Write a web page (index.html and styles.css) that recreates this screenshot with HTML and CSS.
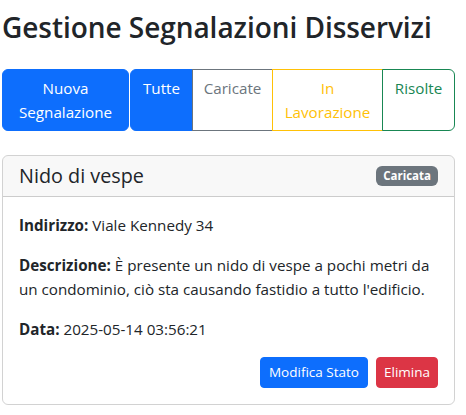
FILE: index.html
```html
<!DOCTYPE html>
<html lang="it">
<head>
<meta charset="utf-8">
<title>Gestione Segnalazioni Disservizi</title>
<link rel="stylesheet" href="styles.css">
</head>
<body>
<div class="page">
  <h1 class="title">Gestione Segnalazioni Disservizi</h1>
  <div class="toolbar">
    <a class="btn btn-primary w-new">Nuova Segnalazione</a>
    <div class="btn-group">
      <a class="btn btn-primary g-first w-all">Tutte</a>
      <a class="btn btn-outline-secondary w-loaded">Caricate</a>
      <a class="btn btn-outline-warning w-work">In Lavorazione</a>
      <a class="btn btn-outline-success g-last w-done">Risolte</a>
    </div>
  </div>
  <div class="card">
    <div class="card-header">
      <h5 class="card-title">Nido di vespe</h5>
      <span class="badge">Caricata</span>
    </div>
    <div class="card-body">
      <p><strong>Indirizzo:</strong> Viale Kennedy 34</p>
      <p><strong>Descrizione:</strong> È presente un nido di vespe a pochi metri da un condominio, ciò sta causando fastidio a tutto l'edificio.</p>
      <p><strong>Data:</strong> 2025-05-14 03:56:21</p>
      <div class="actions">
        <a class="btn btn-sm btn-primary">Modifica Stato</a>
        <a class="btn btn-sm btn-danger">Elimina</a>
      </div>
    </div>
  </div>
</div>
</body>
</html>
```
FILE: styles.css
```css
* { box-sizing: border-box; }
html, body { margin: 0; padding: 0; background: #fff; }
body {
  font-family: "Open Sans", "Noto Sans", "Liberation Sans", sans-serif;
  font-size: 15.2px;
  line-height: 24px;
  color: #212529;
}
.page { padding: 10px 11px 10px 2px; }
.title {
  font-size: 28px;
  font-weight: 600;
  line-height: 35px;
  margin: 0 0 24px 0;
  letter-spacing: -0.05px;
}
.toolbar { display: flex; align-items: stretch; margin-bottom: 24px; }
.btn {
  display: block;
  font-size: 15.2px;
  line-height: 24px;
  padding: 6px 10px;
  border: 1px solid transparent;
  border-radius: 6px;
  background: transparent;
  text-align: center;
  text-decoration: none;
}
.btn-primary { background: #0d6efd; border-color: #0d6efd; color: #fff; }
.btn-danger { background: #dc3545; border-color: #dc3545; color: #fff; }
.btn-outline-secondary { color: #6c757d; border-color: #6c757d; }
.btn-outline-warning { color: #ffc107; border-color: #ffc107; }
.btn-outline-success { color: #198754; border-color: #198754; }
.w-new { width: 127px; }
.w-all { width: 63px; }
.w-loaded { width: 81px; }
.w-work { width: 111px; }
.w-done { width: 73px; }
.btn-group { display: flex; margin-left: 1px; }
.btn-group .btn { border-radius: 0; margin-left: -1px; }
.btn-group .g-first { border-radius: 6px 0 0 6px; margin-left: 0; }
.btn-group .g-last { border-radius: 0 6px 6px 0; }
.card {
  border: 1px solid rgba(0,0,0,0.176);
  border-radius: 6px;
  overflow: hidden;
}
.card-header {
  display: flex;
  justify-content: space-between;
  align-items: center;
  padding: 8px 16px;
  background: rgba(33,37,41,0.03);
  border-bottom: 1px solid rgba(0,0,0,0.176);
}
.card-title { margin: 0; font-size: 19.8px; font-weight: 500; line-height: 24px; }
.badge {
  background: #6c757d;
  color: #fff;
  font-size: 11.5px;
  font-weight: 700;
  line-height: 1;
  padding: 4px 7px;
  border-radius: 6px;
}
.card-body { padding: 16px; }
.card-body p { margin: 0 0 16px 0; }
.card-body strong { font-weight: 700; }
.actions { display: flex; justify-content: flex-end; gap: 8px; }
.btn-sm { font-size: 13.5px; line-height: 21px; padding: 4px 8px; border-radius: 4px; }
.btn-danger.btn-sm { padding: 4px 7px; }
```
